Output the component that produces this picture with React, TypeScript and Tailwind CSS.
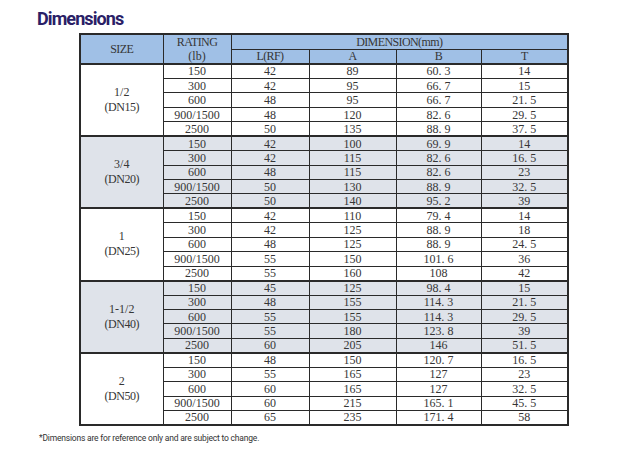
const groups = [
  {
    size: '1/2',
    dn: '(DN15)',
    shaded: false,
    rows: [
      ['150', '42', '89', '60.3', '14'],
      ['300', '42', '95', '66.7', '15'],
      ['600', '48', '95', '66.7', '21.5'],
      ['900/1500', '48', '120', '82.6', '29.5'],
      ['2500', '50', '135', '88.9', '37.5'],
    ],
  },
  {
    size: '3/4',
    dn: '(DN20)',
    shaded: true,
    rows: [
      ['150', '42', '100', '69.9', '14'],
      ['300', '42', '115', '82.6', '16.5'],
      ['600', '48', '115', '82.6', '23'],
      ['900/1500', '50', '130', '88.9', '32.5'],
      ['2500', '50', '140', '95.2', '39'],
    ],
  },
  {
    size: '1',
    dn: '(DN25)',
    shaded: false,
    rows: [
      ['150', '42', '110', '79.4', '14'],
      ['300', '42', '125', '88.9', '18'],
      ['600', '48', '125', '88.9', '24.5'],
      ['900/1500', '55', '150', '101.6', '36'],
      ['2500', '55', '160', '108', '42'],
    ],
  },
  {
    size: '1-1/2',
    dn: '(DN40)',
    shaded: true,
    rows: [
      ['150', '45', '125', '98.4', '15'],
      ['300', '48', '155', '114.3', '21.5'],
      ['600', '55', '155', '114.3', '29.5'],
      ['900/1500', '55', '180', '123.8', '39'],
      ['2500', '60', '205', '146', '51.5'],
    ],
  },
  {
    size: '2',
    dn: '(DN50)',
    shaded: false,
    rows: [
      ['150', '48', '150', '120.7', '16.5'],
      ['300', '55', '165', '127', '23'],
      ['600', '60', '165', '127', '32.5'],
      ['900/1500', '60', '215', '165.1', '45.5'],
      ['2500', '65', '235', '171.4', '58'],
    ],
  },
];

const cell = 'border border-[#2a2a2a] p-0 text-center align-middle leading-none';

// the source font sets the decimal point on a full half-width cell
function Num({ v }: { v: string }) {
  const [a, b] = v.split('.');
  if (b === undefined) return <>{v}</>;
  return (
    <>
      {a}
      <span className="inline-block w-[6px] text-left">.</span>
      {b}
    </>
  );
}

export default function App() {
  return (
    <div className="w-[632px] h-[461px] bg-white relative overflow-hidden">
      <h1
        className="absolute left-[37px] top-[5px] text-[18px] font-bold tracking-[-0.05em] text-[#2a2066]"
        style={{ fontFamily: 'Roboto, "Liberation Sans", sans-serif' }}
      >
        Dimensions
      </h1>

      <div className="pt-[33px] pl-[79px]">
        <table
          className="border-collapse border-2 border-[#2a2a2a] text-[12px] text-[#363636]"
          style={{ fontFamily: '"Liberation Serif", serif' }}
        >
          <colgroup>
            <col className="w-[83px]" />
            <col className="w-[68px]" />
            <col className="w-[78px]" />
            <col className="w-[87px]" />
            <col className="w-[85px]" />
            <col className="w-[87px]" />
          </colgroup>
          <thead className="tracking-[-0.6px]">
            <tr className="h-[14.5px] bg-[#a0c0e6]">
              <th rowSpan={2} className={`${cell} font-normal border-b-2`}>SIZE</th>
              <th rowSpan={2} className={`${cell} font-normal border-b-2`}>
                <div className="leading-[14px]">RATING</div>
                <div className="leading-[14px] tracking-normal">(lb)</div>
              </th>
              <th colSpan={4} className={`${cell} font-normal`}>DIMENSION(mm)</th>
            </tr>
            <tr className="h-[14.5px] bg-[#a0c0e6]">
              <th className={`${cell} font-normal border-b-2`}>L(RF)</th>
              <th className={`${cell} font-normal border-b-2`}>A</th>
              <th className={`${cell} font-normal border-b-2`}>B</th>
              <th className={`${cell} font-normal border-b-2`}>T</th>
            </tr>
          </thead>
          <tbody>
            {groups.map((g) =>
              g.rows.map((r, i) => (
                <tr key={g.size + i} className={`h-[14.45px] ${g.shaded ? 'bg-[#dfe3ea]' : 'bg-white'}`}>
                  {i === 0 && (
                    <td rowSpan={5} className={`${cell} border-b-2`}>
                      <div className="leading-[15px]">{g.size}</div>
                      <div className="leading-[15px] tracking-[-0.5px]">{g.dn}</div>
                    </td>
                  )}
                  {r.map((v, j) => (
                    <td key={j} className={`${cell} ${i === 4 ? 'border-b-2' : ''}`}>
                      <Num v={v} />
                    </td>
                  ))}
                </tr>
              ))
            )}
          </tbody>
        </table>
      </div>

      <p
        className="absolute left-[39px] top-[432px] text-[8.5px] tracking-[-0.2px] text-[#333]"
        style={{ fontFamily: 'Roboto, "Liberation Sans", sans-serif' }}
      >
        *Dimensions are for reference only and are subject to change.
      </p>
    </div>
  );
}
